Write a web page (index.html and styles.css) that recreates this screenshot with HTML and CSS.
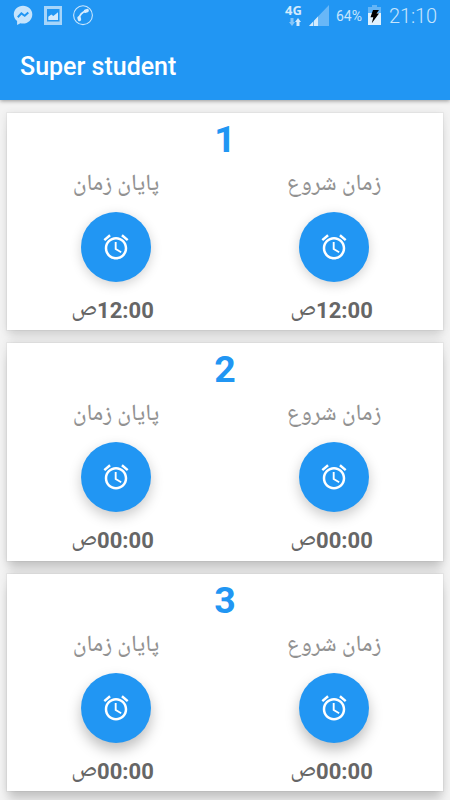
FILE: index.html
```html
<!DOCTYPE html>
<html lang="en">
<head>
<meta charset="utf-8">
<meta name="viewport" content="width=device-width">
<title>Super student</title>
<link rel="stylesheet" href="styles.css">
</head>
<body>
<svg width="0" height="0" class="defs"><symbol id="alarm" viewBox="0 0 24 24"><path d="M22 5.72l-4.6-3.86-1.29 1.53 4.6 3.86L22 5.72zM7.88 3.39L6.6 1.86 2 5.71l1.29 1.53 4.59-3.85zM12.5 8H11v6l4.75 2.85.75-1.23-4-2.37V8zM12 4c-4.97 0-9 4.03-9 9s4.02 9 9 9c4.97 0 9-4.03 9-9s-4.03-9-9-9zm0 16c-3.87 0-7-3.13-7-7s3.13-7 7-7 7 3.13 7 7-3.13 7-7 7z"/></symbol></svg>
<header class="appbar">
  <div class="status">
    <svg class="notifications" width="94" height="26" viewBox="0 0 94 26">
      <path fill="#c6e4fc" d="M23 5.700c-5.200 0-9.200 3.800-9.200 8.700 0 2.800 1.300 5 3.300 6.600v3.900l3.300-1.700c.8.200 1.700.3 2.600.3 5.200 0 9.300-4 9.300-9.100S28.200 5.700 23 5.700z"/>
      <path fill="none" stroke="#2196f3" stroke-width="2" d="M17.800 17.200l3.600-3.800 3.300 2.400 3.600-3.400"/>
      <path fill="#a6d5fa" fill-rule="evenodd" d="M44 6h18v19H44zM47 9v12.500h12.500V9z"/>
      <path fill="#d3eafd" d="M48.300 20v-3.200l3-2.300 2 1.400 4.700-3.700V20z"/>
      <circle cx="83" cy="15.200" r="9.400" fill="none" stroke="#c9e6fd" stroke-width="1.100"/>
      <path fill="none" stroke="#d7edfe" stroke-width="2" d="M79.100 19.300c.1-4 3.200-7.400 7.500-8.400"/>
      <path stroke="#d7edfe" stroke-width="3.400" stroke-linecap="round" d="M79 17.800l.5 1.700M85.500 11.200l1.700-.6"/>
    </svg>
    <div class="network"><span class="g4">4G</span>
      <svg class="arrows" width="12" height="9" viewBox="0 0 12 9"><path fill="#85c5f8" d="M1.500 0h3v4H6L3 8 0 4h1.500z"/><path fill="#d4ebfd" d="M7.500 8h3V4H12L9 0 6 4h1.500z"/></svg>
    </div>
    <svg class="signal" width="20" height="21" viewBox="0 0 20 21"><path fill="#68b7f7" d="M20 0v21H0z"/><path fill="#d4ebfd" d="M0 21l4-4.200V21zM5 21v-5.200L9 11.600V21z"/></svg>
    <span class="percent">64%</span>
    <svg class="battery" width="13" height="20" viewBox="0 0 13 20"><path fill="#64b5f6" d="M4 0h5v2h4v7H0V2h4z"/><path fill="#dff1fe" d="M0 8h13v12H0z"/><path d="M5 5h6L8.500 8.500H11L3.800 18.200l1.500-6H2.500z"/></svg>
    <span class="clock">21:10</span>
  </div>
  <h1 class="title">Super student</h1>
</header>
<main class="list">
  <section class="card one">
    <h2 class="number">1</h2>
    <div class="times">
      <div class="time"><div class="label" dir="rtl" lang="fa">پایان زمان</div><button class="fab"><svg class="icon"><use href="#alarm"/></svg></button><div class="value end" dir="rtl">12:00<span class="period">ص</span></div></div>
      <div class="time"><div class="label" dir="rtl" lang="fa">زمان شروع</div><button class="fab"><svg class="icon"><use href="#alarm"/></svg></button><div class="value" dir="rtl">12:00<span class="period">ص</span></div></div>
    </div>
  </section>
  <section class="card two">
    <h2 class="number">2</h2>
    <div class="times">
      <div class="time"><div class="label" dir="rtl" lang="fa">پایان زمان</div><button class="fab"><svg class="icon"><use href="#alarm"/></svg></button><div class="value end" dir="rtl">00:00<span class="period">ص</span></div></div>
      <div class="time"><div class="label" dir="rtl" lang="fa">زمان شروع</div><button class="fab"><svg class="icon"><use href="#alarm"/></svg></button><div class="value" dir="rtl">00:00<span class="period">ص</span></div></div>
    </div>
  </section>
  <section class="card three">
    <h2 class="number">3</h2>
    <div class="times">
      <div class="time"><div class="label" dir="rtl" lang="fa">پایان زمان</div><button class="fab"><svg class="icon"><use href="#alarm"/></svg></button><div class="value end" dir="rtl">00:00<span class="period">ص</span></div></div>
      <div class="time"><div class="label" dir="rtl" lang="fa">زمان شروع</div><button class="fab"><svg class="icon"><use href="#alarm"/></svg></button><div class="value" dir="rtl">00:00<span class="period">ص</span></div></div>
    </div>
  </section>
</main>
</body>
</html>
```
FILE: styles.css
```css
* { box-sizing: border-box; }
body {
  margin: 0;
  height: 800px;
  overflow: hidden;
  background: #f3f3f3;
  font-family: Roboto, "DejaVu Sans", sans-serif;
}
.defs { position: absolute; }
.appbar {
  position: relative;
  height: 100px;
  background: #2196f3;
  box-shadow: 0 1px 4px rgba(0, 0, 0, .38);
}
.status { display: flex; height: 33px; color: #c7e5fc; }
.network { width: 18px; margin-left: 191px; padding-top: 3px; }
.g4 { display: block; font: bold 13px/14px "Open Sans", sans-serif; color: #d4ebfd; }
.arrows { display: block; margin: 1px 0 0 4px; }
.signal { margin: 5px 0 0 6px; }
.percent { width: 28px; margin: 7px 0 0 7px; font-size: 14px; line-height: 18px; }
.battery { margin: 5px 0 0 4px; }
.clock { margin: 4px 0 0 8px; font-size: 20px; line-height: 24px; font-weight: 300; letter-spacing: -.1px; }
.title { margin: 17px 0 0 20px; font-size: 25px; line-height: 34px; font-weight: 500; color: #fff; }
.list { display: flex; flex-direction: column; gap: 13.300px; padding: 13px 7px 0; }
.card {
  flex: none;
  height: 217.200px;
  background: #fff;
  box-shadow: 0 0 0 1px rgba(0, 0, 0, .03), 0 1px 8px rgba(0, 0, 0, .1), 0 12px 10px -2px rgba(0, 0, 0, .08);
}
.two { box-shadow: 0 0 0 1px rgba(0, 0, 0, .03), 0 1px 8px rgba(0, 0, 0, .1), 0 12px 10px -2px rgba(0, 0, 0, .14); }
.three { box-shadow: 0 0 0 1px rgba(0, 0, 0, .03), 0 1px 8px rgba(0, 0, 0, .1), 0 12px 10px -2px rgba(0, 0, 0, .15); }
.number {
  margin: 0;
  padding-top: 4px;
  height: 51px;
  font-size: 37.500px;
  line-height: 44px;
  text-align: center;
  color: #2196f3;
}
.times { display: grid; grid-template-columns: 1fr 1fr; }
.time { display: flex; flex-direction: column; align-items: center; }
.label { height: 48px; font-family: "Noto Naskh Arabic UI", "Noto Naskh Arabic", "DejaVu Sans", sans-serif; font-size: 23.200px; line-height: 41px; font-weight: 500; color: #929292; white-space: nowrap; }
.fab {
  display: flex;
  align-items: center;
  justify-content: center;
  width: 70px;
  height: 70px;
  padding: 0;
  border: 0;
  border-radius: 50%;
  background: #2196f3;
  box-shadow: 0 3px 12px rgba(0, 0, 0, .18);
}
.two .fab { box-shadow: 0 5px 13px rgba(0, 0, 0, .21); }
.three .fab { box-shadow: 0 7px 14px rgba(0, 0, 0, .26); }
.icon { width: 30px; height: 30px; fill: #fff; }
.value { height: 34px; margin: 12px 5px 0 0; font-size: 22px; line-height: 34px; font-weight: 700; color: #666; white-space: nowrap; }
.value.end { margin-right: 7px; }
.period { font-family: "Noto Naskh Arabic UI", "Noto Naskh Arabic", "DejaVu Sans", sans-serif; font-size: 23.400px; line-height: 20px; font-weight: 500; }
```
